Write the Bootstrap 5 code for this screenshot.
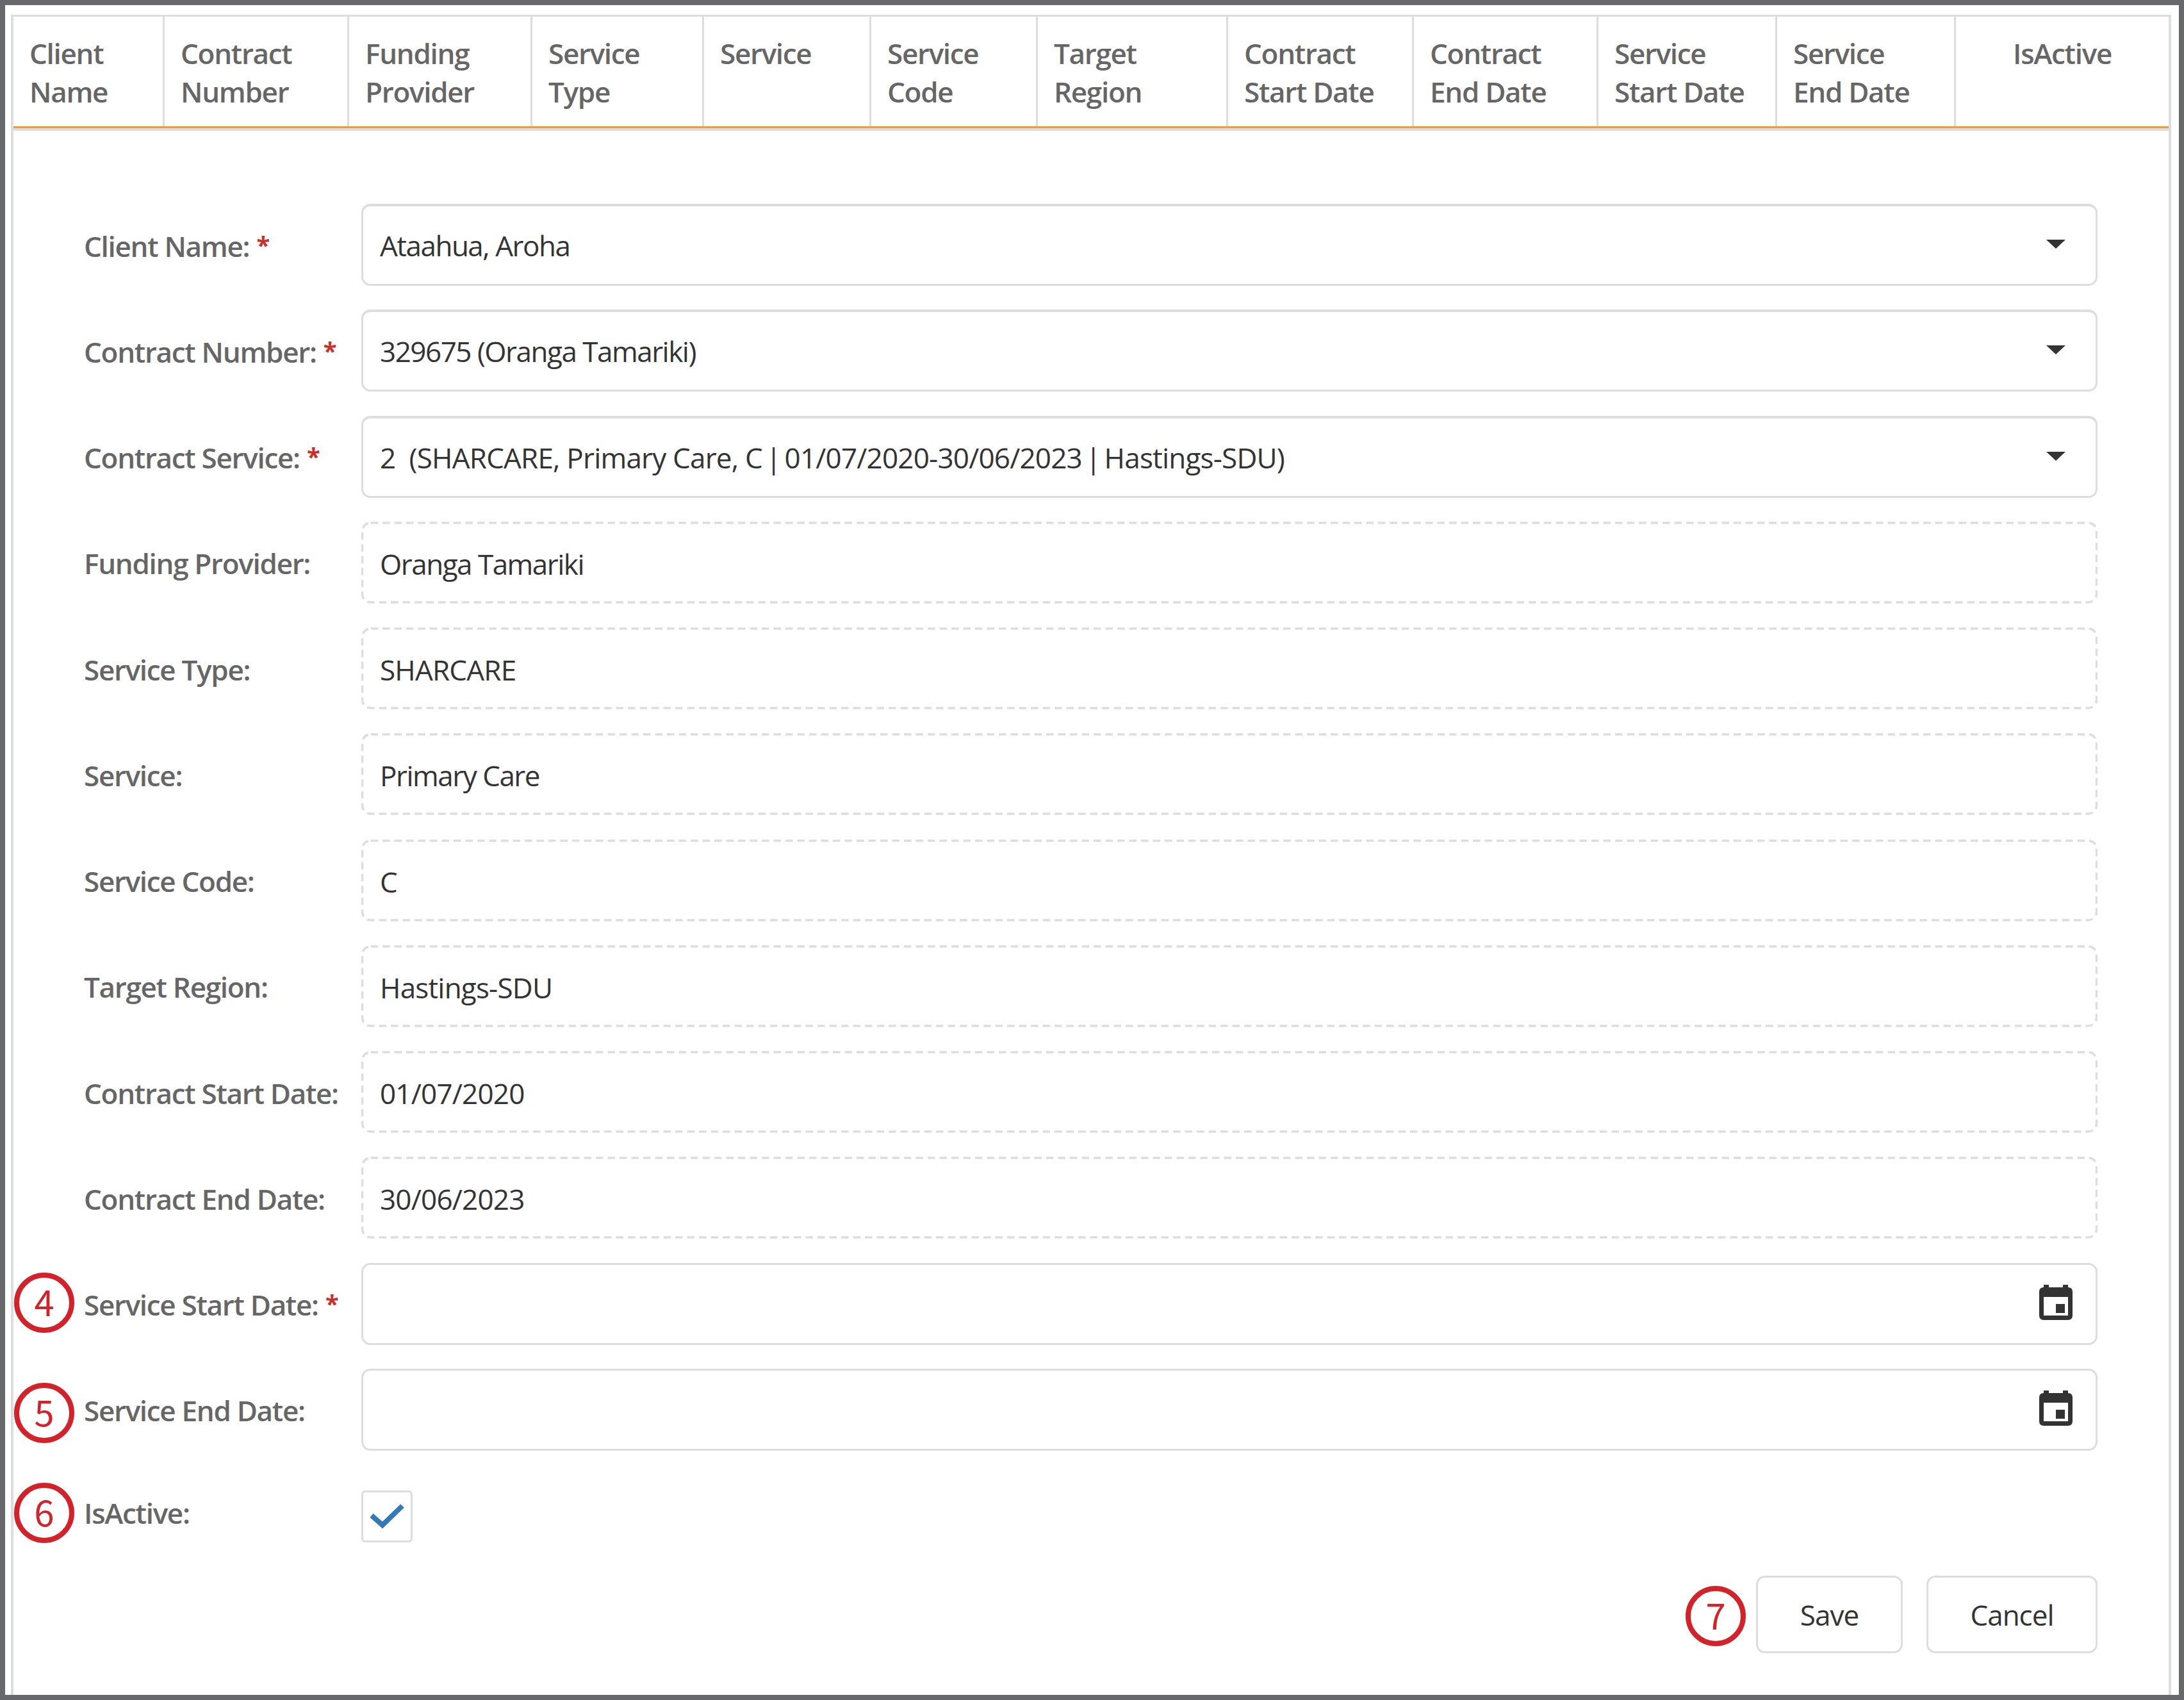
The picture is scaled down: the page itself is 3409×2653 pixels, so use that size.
<!DOCTYPE html>
<html lang="en">
<head>
  <meta charset="UTF-8" />
  <meta name="viewport" content="width=device-width, initial-scale=1.0" />
  <title>Client Contract Service</title>
  <link href="https://cdn.jsdelivr.net/npm/bootstrap@5.3.3/dist/css/bootstrap.min.css" rel="stylesheet" />
  <style>
    body {
      font-family: "Open Sans", "Noto Sans", sans-serif;
      font-size: 44px;
      line-height: 60px;
      color: #333;
      background-color: #fff;
    }

    .page-frame {
      height: 2653px;
      border: 8px solid #67686c;
      padding: 15px 12px 0 9px;
    }

    .grid-panel {
      border: 4px solid #ddd;
      border-top-width: 3px;
      border-bottom: 0;
    }

    .grid-head {
      display: grid;
      grid-template-columns: 236px 288px 286px 268px 261px 260px 297px 290px 288px 279px 279px 332px;
      height: 178px;
      border-bottom: 4px solid #ddd;
      box-shadow: inset 0 -3px #f79a28;
      padding-bottom: 3px;
      font-weight: 600;
      color: #666;
      letter-spacing: -1.3px;
    }

    .grid-head > div {
      padding: 27px 10px 0 25px;
      border-right: 3px solid #ddd;
    }

    .grid-head > div:last-child {
      border-right: 0;
      padding: 27px 0 0;
    }

    .edit-form {
      padding: 114px 111px 0 110px;
    }

    .field-row {
      height: 128px;
      margin-bottom: 37.27px;
    }

    .field-label {
      width: 433px;
      flex: none;
      padding-top: 3px;
      font-weight: 600;
      color: #666;
      letter-spacing: -1.3px;
    }

    .req {
      margin-left: 1px;
      color: #c9302c;
      font-size: 38px;
      font-weight: 700;
      line-height: 1;
      vertical-align: 4px;
    }

    .field-box {
      position: relative;
      height: 128px;
      border: 3px solid #ddd;
      border-radius: 14px;
      padding: 1px 36px 0 26px;
      font-size: 44px;
      line-height: 60px;
      color: #333;
      letter-spacing: -1.5px;
    }

    .solid-top {
      border-top-width: 4px;
    }

    .field-box.locked {
      border-color: transparent;
      padding-top: 4px;
    }

    /* dashed outline of read-only fields */
    .dash-line {
      position: absolute;
      top: -3px;
      left: -3px;
      width: calc(100% + 6px);
      height: 128px;
    }

    .dash-line rect {
      x: 1.5px;
      y: 2px;
      width: calc(100% - 3px);
      height: 124px;
      rx: 13px;
      fill: none;
      stroke: #ddd;
      stroke-width: 3.5px;
      stroke-dasharray: 11.5 7;
    }

    .caps {
      letter-spacing: -0.8px;
    }

    .bar {
      margin: 0 -5px;
    }

    .tick-box {
      width: 80px;
      height: 81px;
      margin-top: 2px;
      border: 3px solid #ddd;
      border-radius: 6px;
    }

    .form-actions {
      margin-top: -7px;
    }

    .btn-form {
      height: 121px;
      border: 3px solid #ddd;
      border-radius: 14px;
      font-size: 44px;
      color: #333;
      letter-spacing: -1px;
    }

    .step {
      position: absolute;
      width: 94px;
      height: 94px;
      border: 8px solid #d2232a;
      border-radius: 50%;
      color: #d2232a;
      font: 400 56px/72px "Noto Sans CJK SC", sans-serif;
      text-align: center;
    }

    .field-row .step {
      left: -109px;
    }
  </style>
</head>
<body>
  <div class="page-frame">
    <div class="grid-panel h-100">
      <!-- Column headings -->
      <div class="grid-head">
        <div>Client<br>Name</div>
        <div>Contract<br>Number</div>
        <div>Funding<br>Provider</div>
        <div>Service<br>Type</div>
        <div>Service</div>
        <div>Service<br>Code</div>
        <div>Target<br>Region</div>
        <div>Contract<br>Start Date</div>
        <div>Contract<br>End Date</div>
        <div>Service<br>Start Date</div>
        <div>Service<br>End Date</div>
        <div class="text-center">IsActive</div>
      </div>

      <!-- Edit form -->
      <form class="edit-form">
        <div class="field-row d-flex align-items-center">
          <label class="field-label">Client Name: <span class="req">*</span></label>
          <div class="form-control field-box solid-top d-flex align-items-center justify-content-between">
            <span>Ataahua, Aroha</span>
            <svg class="me-2 mb-1" width="33" height="14" viewBox="0 0 33 14"><path d="M0 0h30L15 14z" fill="#333"/></svg>
          </div>
        </div>
        <div class="field-row d-flex align-items-center">
          <label class="field-label">Contract Number: <span class="req">*</span></label>
          <div class="form-control field-box solid-top d-flex align-items-center justify-content-between">
            <span>329675 (Oranga Tamariki)</span>
            <svg class="me-2 mb-1" width="33" height="14" viewBox="0 0 33 14"><path d="M0 0h30L15 14z" fill="#333"/></svg>
          </div>
        </div>
        <div class="field-row d-flex align-items-center">
          <label class="field-label">Contract Service: <span class="req">*</span></label>
          <div class="form-control field-box solid-top d-flex align-items-center justify-content-between">
            <span class="caps">2&nbsp; (SHARCARE, Primary Care, C <span class="bar">|</span> 01/07/2020-30/06/2023 <span class="bar">|</span> Hastings-SDU)</span>
            <svg class="me-2 mb-1" width="33" height="14" viewBox="0 0 33 14"><path d="M0 0h30L15 14z" fill="#333"/></svg>
          </div>
        </div>
        <div class="field-row d-flex align-items-center">
          <label class="field-label">Funding Provider:</label>
          <div class="form-control field-box locked d-flex align-items-center">
            <svg class="dash-line"><rect/></svg>Oranga Tamariki
          </div>
        </div>
        <div class="field-row d-flex align-items-center">
          <label class="field-label">Service Type:</label>
          <div class="form-control field-box locked caps d-flex align-items-center">
            <svg class="dash-line"><rect/></svg>SHARCARE
          </div>
        </div>
        <div class="field-row d-flex align-items-center">
          <label class="field-label">Service:</label>
          <div class="form-control field-box locked d-flex align-items-center">
            <svg class="dash-line"><rect/></svg>Primary Care
          </div>
        </div>
        <div class="field-row d-flex align-items-center">
          <label class="field-label">Service Code:</label>
          <div class="form-control field-box locked caps d-flex align-items-center">
            <svg class="dash-line"><rect/></svg>C
          </div>
        </div>
        <div class="field-row d-flex align-items-center">
          <label class="field-label">Target Region:</label>
          <div class="form-control field-box locked caps d-flex align-items-center">
            <svg class="dash-line"><rect/></svg>Hastings-SDU
          </div>
        </div>
        <div class="field-row d-flex align-items-center">
          <label class="field-label">Contract Start Date:</label>
          <div class="form-control field-box locked caps d-flex align-items-center">
            <svg class="dash-line"><rect/></svg>01/07/2020
          </div>
        </div>
        <div class="field-row d-flex align-items-center">
          <label class="field-label">Contract End Date:</label>
          <div class="form-control field-box locked caps d-flex align-items-center">
            <svg class="dash-line"><rect/></svg>30/06/2023
          </div>
        </div>
        <div class="field-row d-flex align-items-center position-relative">
          <span class="step" style="top: 15px">4</span>
          <label class="field-label">Service Start Date: <span class="req">*</span></label>
          <div class="form-control field-box pt-0 d-flex align-items-center justify-content-end">
            <svg class="mb-1" width="52" height="55" viewBox="0 0 52 55"><path fill="#333" fill-rule="evenodd" d="M7 0h8v4h22V0h8v4q7 0 7 7v37q0 7-7 7H7q-7 0-7-7V11q0-7 7-7zM7 19v29h38V19zM26 30h14v14H26z"/></svg>
          </div>
        </div>
        <div class="field-row d-flex align-items-center position-relative">
          <span class="step" style="top: 22px">5</span>
          <label class="field-label">Service End Date:</label>
          <div class="form-control field-box pt-0 d-flex align-items-center justify-content-end">
            <svg class="mb-1" width="52" height="55" viewBox="0 0 52 55"><path fill="#333" fill-rule="evenodd" d="M7 0h8v4h22V0h8v4q7 0 7 7v37q0 7-7 7H7q-7 0-7-7V11q0-7 7-7zM7 19v29h38V19zM26 30h14v14H26z"/></svg>
          </div>
        </div>
        <div class="field-row d-flex align-items-center position-relative">
          <span class="step" style="top: 13px">6</span>
          <label class="field-label pb-2 mb-1">IsActive:</label>
          <div class="tick-box d-flex align-items-center justify-content-center">
            <svg width="54" height="39" viewBox="0 0 54 39"><path d="M3 18l17 15L51 3" fill="none" stroke="#337ab7" stroke-width="8"/></svg>
          </div>
        </div>

        <!-- Actions -->
        <div class="form-actions d-flex justify-content-end position-relative">
          <span class="step" style="right: 549px; top: 16px">7</span>
          <button type="button" class="btn btn-form" style="width: 229px; margin-right: 37px">Save</button>
          <button type="button" class="btn btn-form" style="width: 267px">Cancel</button>
        </div>
      </form>
    </div>
  </div>

  <script src="https://cdn.jsdelivr.net/npm/bootstrap@5.3.3/dist/js/bootstrap.bundle.min.js"></script>
</body>
</html>
